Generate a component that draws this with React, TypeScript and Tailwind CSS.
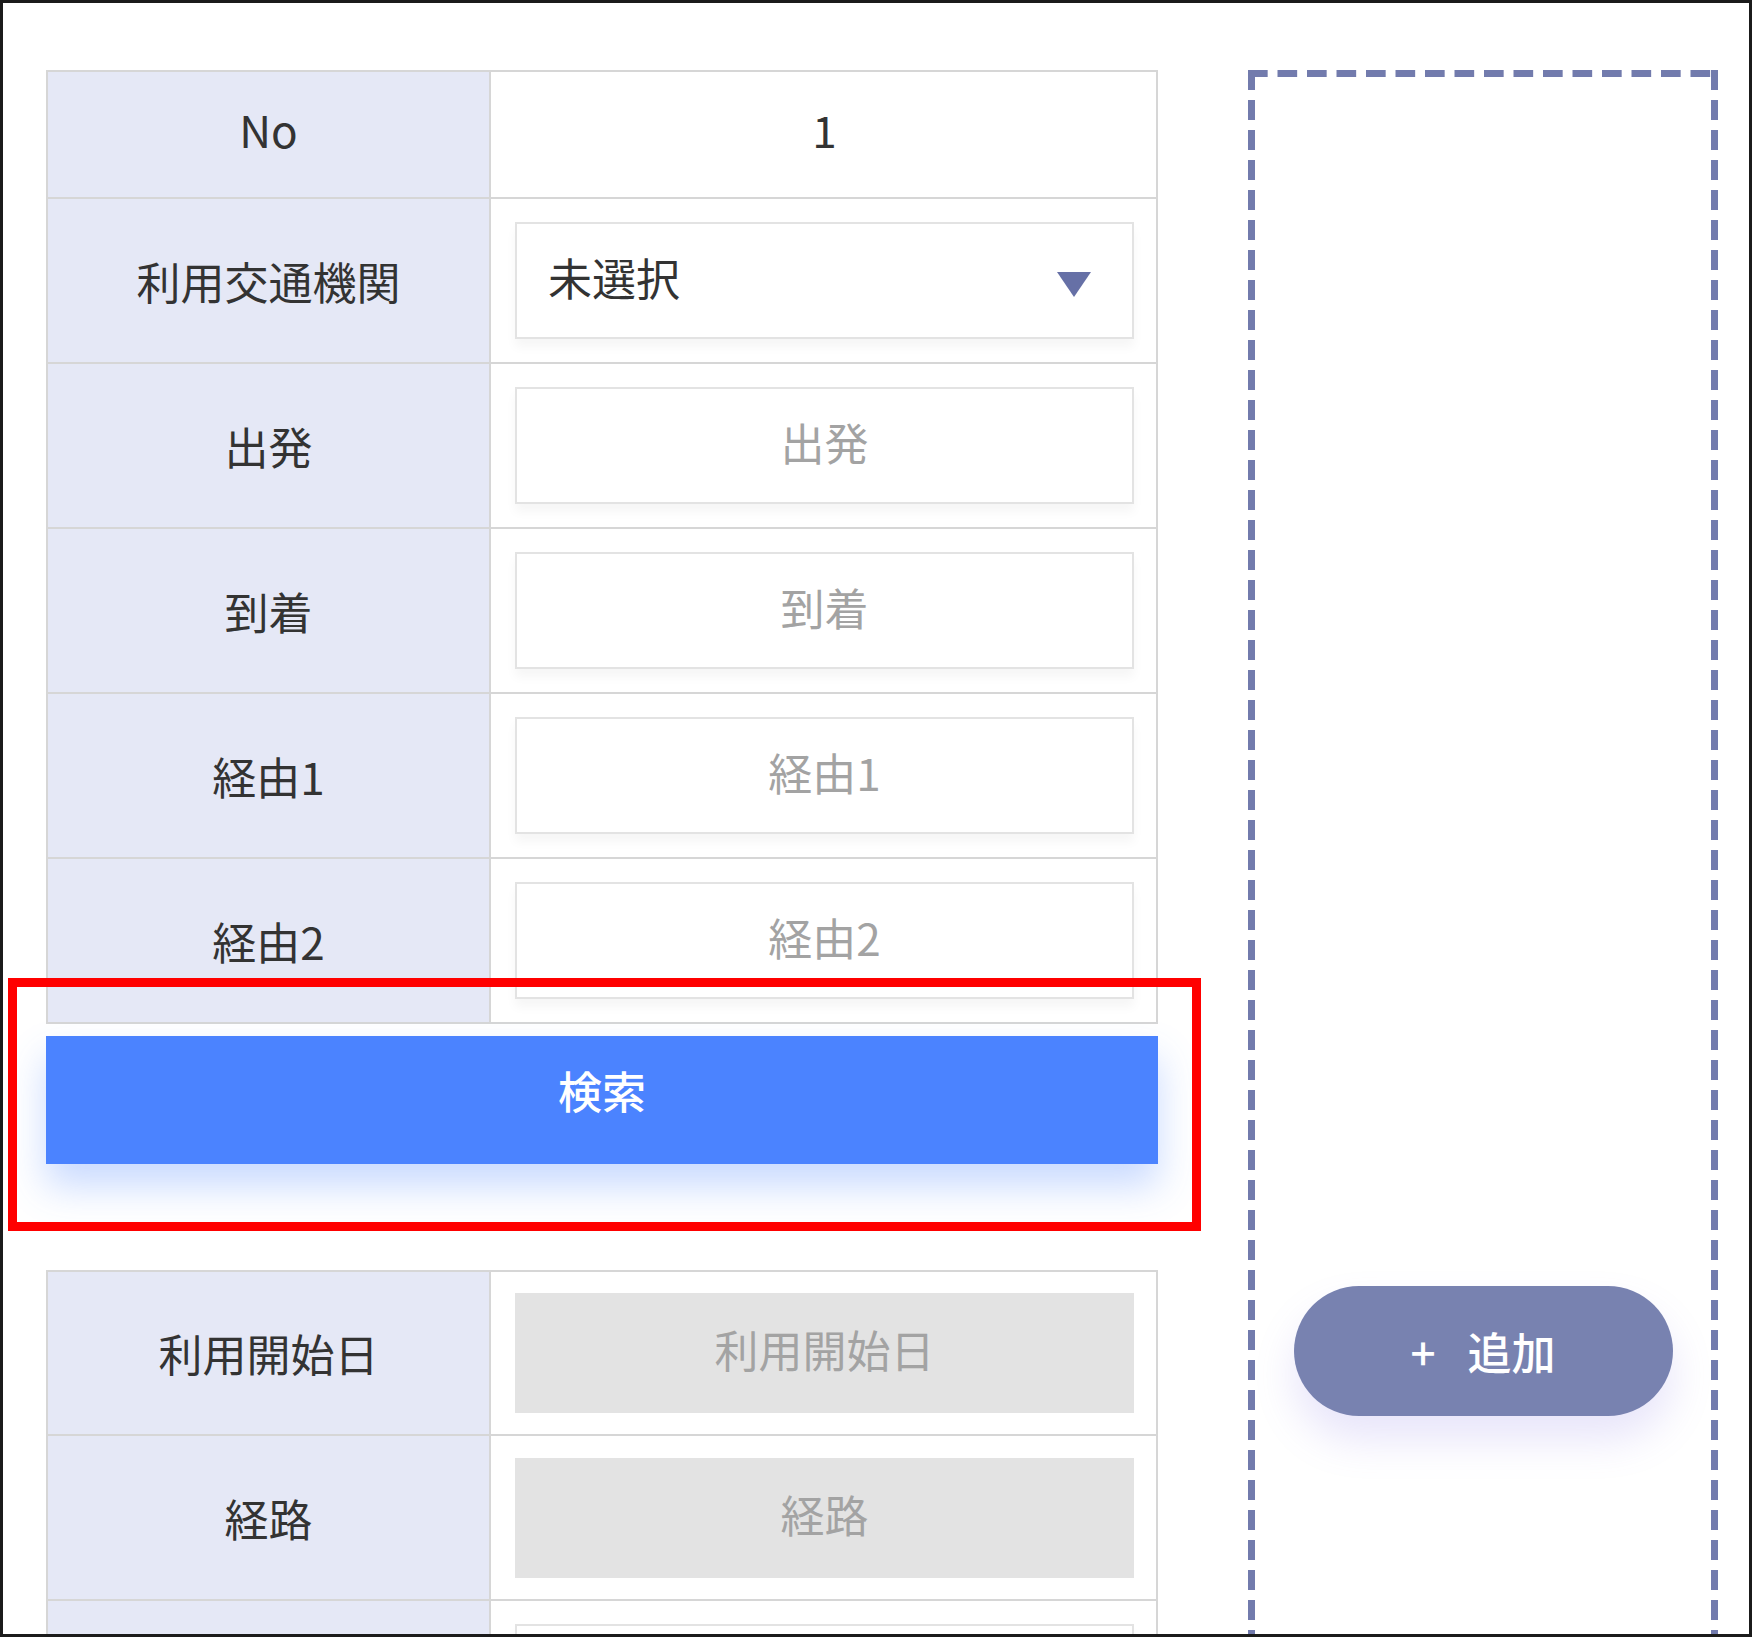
import React from "react"

type Row = { label: string; kind: "text" | "select" | "input" | "disabled"; value: string }

const routeRows: Row[] = [
	{ label: "No", kind: "text", value: "1" },
	{ label: "利用交通機関", kind: "select", value: "未選択" },
	{ label: "出発", kind: "input", value: "出発" },
	{ label: "到着", kind: "input", value: "到着" },
	{ label: "経由1", kind: "input", value: "経由1" },
	{ label: "経由2", kind: "input", value: "経由2" },
]

const resultRows: Row[] = [
	{ label: "利用開始日", kind: "disabled", value: "利用開始日" },
	{ label: "経路", kind: "disabled", value: "経路" },
	{ label: "", kind: "input", value: "" },
]

function Cell({ row }: { row: Row }) {
	if (row.kind === "text") {
		return <span className="pb-[12px] text-[#333]">{row.value}</span>
	}
	if (row.kind === "select") {
		return (
			<div className="flex h-[117px] w-full items-center justify-between border-2 border-[#e3e3e3] bg-white pl-[31px] pr-[41px] shadow-[0_8px_10px_rgba(0,0,0,0.04)]">
				<span className="pb-[8px] text-[#333]">{row.value}</span>
				<svg width="34" height="25" viewBox="0 0 34 25" className="mt-[8px]">
					<path d="M0 0 L34 0 L17 25 Z" fill="#6670a6" />
				</svg>
			</div>
		)
	}
	if (row.kind === "disabled") {
		return (
			<div className="flex h-[120px] w-full items-center justify-center bg-[#e3e3e3] pb-[8px] text-[#a3a3a3]">
				{row.value}
			</div>
		)
	}
	return (
		<div className="flex h-[117px] w-full items-center justify-center border-2 border-[#e3e3e3] bg-white pb-[8px] text-[#a3a3a3] shadow-[0_8px_10px_rgba(0,0,0,0.04)]">
			{row.value}
		</div>
	)
}

function FormTable({ rows, firstHeight }: { rows: Row[]; firstHeight: string }) {
	return (
		<div className="border-2 border-[#d6d6d6]">
			{rows.map((row, i) => (
				<div
					key={i}
					className={`flex ${i === 0 ? firstHeight : "h-[165px] border-t-2 border-[#d6d6d6]"}`}
				>
					<div
						className={`flex w-[443px] shrink-0 items-center justify-center border-r-2 border-[#d6d6d6] bg-[#e5e8f6] text-[#333] ${
							i === 0 && row.label === "No" ? "pb-[12px]" : ""
						}`}
					>
						{row.label}
					</div>
					<div className="flex flex-1 items-center justify-center bg-white pl-[24px] pr-[22px]">
						<Cell row={row} />
					</div>
				</div>
			))}
		</div>
	)
}

export default function App() {
	return (
		<div className="relative h-[1637px] w-[1752px] overflow-hidden border-[3px] border-[#1b1b1b] bg-white font-['Noto_Sans_CJK_JP',sans-serif] text-[44px] leading-none">
			<div className="flex items-start pl-[43px] pt-[67px]">
				<div className="w-[1112px] shrink-0">
					<FormTable rows={routeRows} firstHeight="h-[125px]" />

					<button className="mt-[12px] flex h-[128px] w-full items-center justify-center bg-[#4b83ff] pb-[20px] font-medium text-white shadow-[0_22px_36px_rgba(77,132,255,0.3)]">
						検索
					</button>

					<div className="mt-[106px]">
						<FormTable rows={resultRows} firstHeight="h-[162px]" />
					</div>
				</div>

				{/* dashed drop area: dashes drawn with gradients to get the long-dash look */}
				<div className="ml-[90px] h-[1700px] w-[470px] shrink-0 p-[7px] [background-image:linear-gradient(to_right,#727bad_68%,transparent_0),linear-gradient(to_bottom,#727bad_68%,transparent_0),linear-gradient(to_bottom,#727bad_68%,transparent_0)] [background-position:0_0,0_0,100%_0] [background-repeat:repeat-x,repeat-y,repeat-y] [background-size:29.5px_7px,7px_30px,7px_30px]">
					<button className="mx-auto mt-[1209px] flex h-[130px] w-[379px] items-center justify-center rounded-full bg-[#7882b0] font-medium text-white shadow-[0_24px_40px_rgba(130,110,230,0.18)]">
						<span className="mr-[32px]">+</span>
						<span>追加</span>
					</button>
				</div>
			</div>

			{/* annotation frame */}
			<div className="pointer-events-none absolute left-[5px] top-[975px] h-[253px] w-[1193px] border-[9px] border-[#ff0000]" />
		</div>
	)
}
